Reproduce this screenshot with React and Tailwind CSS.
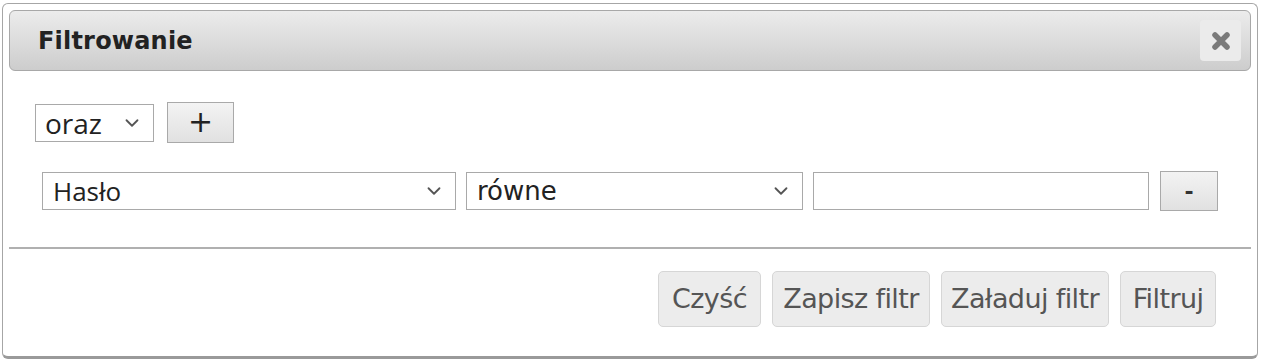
import { ChevronDown } from 'lucide-react'

const sel = "flex items-center justify-between bg-white border border-[#a9a9a9] text-[#222]"

function Select({ label, className, font }) {
  return (
    <div className={`${sel} ${className}`}>
      <span className={font}>{label}</span>
      <ChevronDown size={22} strokeWidth={2} className="text-[#555]" />
    </div>
  )
}

export default function App() {
  return (
    <div className="w-[1264px] h-[360px] bg-white overflow-hidden">
      <div className="ml-[2px] mt-[3px] w-[1256px] h-[356px] border border-[#a6a6a6] border-b-[3px] border-b-[#9a9a9a] rounded-[6px] p-[6px] flex flex-col">
        {/* title bar */}
        <div className="h-[61px] shrink-0 rounded-[6px] border border-[#a8a8a8] bg-gradient-to-b from-[#ececec] to-[#cdcdcd] flex items-center justify-between pl-[28px] pr-[9px]">
          <h1 className="font-['DejaVu_Sans',sans-serif] font-bold text-[24px] text-[#222] tracking-[0.2px]">Filtrowanie</h1>
          <button className="w-[41px] h-[41px] rounded-[4px] bg-[#ebebeb] flex items-center justify-center">
            <svg width="22" height="22" viewBox="0 0 22 22">
              <path d="M5 5 L17 17 M17 5 L5 17" stroke="#7a7a7a" strokeWidth="5.5" strokeLinecap="round" />
            </svg>
          </button>
        </div>

        {/* operator row */}
        <div className="flex items-center gap-[13px] mt-[31px] ml-[26px]">
          <Select label="oraz" className="w-[119px] h-[38px] pl-[9px] pr-[10px]" font="font-['Open_Sans',sans-serif] text-[28px] leading-none" />
          <button className="w-[67px] h-[41px] border border-[#a9a9a9] bg-gradient-to-b from-[#f3f3f3] to-[#e1e1e1] text-[30px] leading-none text-[#222] font-['DejaVu_Sans',sans-serif] flex items-center justify-center pb-[2px]">+</button>
        </div>

        {/* condition row */}
        <div className="flex items-center mt-[28px] ml-[33px] gap-[10px]">
          <Select label="Hasło" className="w-[414px] h-[38px] pl-[10px] pr-[10px]" font="font-['Open_Sans',sans-serif] text-[26px] leading-none" />
          <Select label="równe" className="w-[337px] h-[38px] pl-[10px] pr-[10px]" font="font-['DejaVu_Sans',sans-serif] text-[26px] leading-none" />
          <input className="w-[336px] h-[38px] border border-[#a9a9a9] bg-white outline-none" />
          <button className="w-[58px] h-[40px] ml-[1px] border border-[#a9a9a9] bg-gradient-to-b from-[#f3f3f3] to-[#e1e1e1] text-[22px] font-bold text-[#333] font-['DejaVu_Sans',sans-serif] flex items-center justify-center">-</button>
        </div>

        <div className="h-[2px] bg-[#b0b0b0] mt-[36px] shrink-0" />

        {/* footer buttons */}
        <div className="flex justify-end gap-[11px] mt-[22px] pr-[35px] font-['DejaVu_Sans',sans-serif] text-[27px] tracking-[-0.6px] text-[#555]">
          <button className="w-[103px] h-[56px] rounded-[5px] border border-[#d6d6d6] bg-[#ececec]">Czyść</button>
          <button className="w-[158px] h-[56px] rounded-[5px] border border-[#d6d6d6] bg-[#ececec]">Zapisz filtr</button>
          <button className="w-[168px] h-[56px] rounded-[5px] border border-[#d6d6d6] bg-[#ececec]">Załaduj filtr</button>
          <button className="w-[96px] h-[56px] rounded-[5px] border border-[#d6d6d6] bg-[#ececec]">Filtruj</button>
        </div>
      </div>
    </div>
  )
}
